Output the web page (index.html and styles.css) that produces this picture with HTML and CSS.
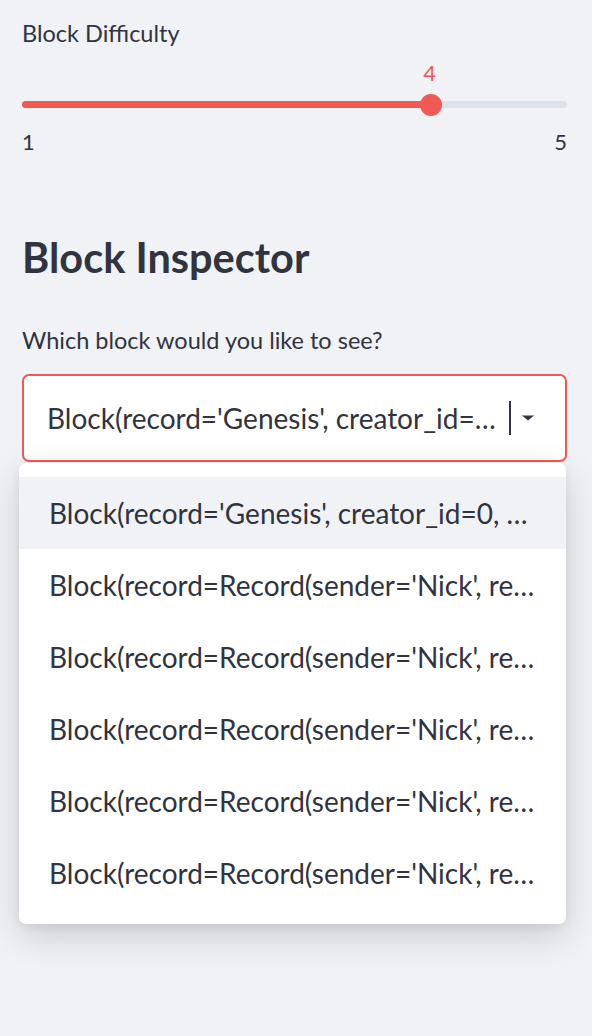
FILE: index.html
```html
<!DOCTYPE html>
<html>
<head>
<meta charset="utf-8">
<link rel="stylesheet" href="styles.css">
</head>
<body>
<div class="page">
  <section class="slider-block">
    <div class="label">Block Difficulty</div>
    <div class="slider">
      <div class="value" style="left: 75%">4</div>
      <div class="track">
        <div class="fill" style="width: 75%"></div>
        <div class="thumb" style="left: 75%"></div>
      </div>
    </div>
    <div class="ticks"><span>1</span><span>5</span></div>
  </section>

  <h2 class="heading">Block Inspector</h2>

  <section class="select-block">
    <div class="label">Which block would you like to see?</div>
    <div class="select">
      <span class="select-text">Block(record='Genesis', creator_id=…</span>
      <span class="select-controls">
        <span class="divider"></span>
        <svg class="arrow" width="14" height="8" viewBox="0 0 14 8"><path d="M1 1.5 L7 6.5 L13 1.5 Z" fill="#31333f"/></svg>
      </span>
    </div>
    <ul class="menu">
      <li class="item active">Block(record='Genesis', creator_id=0, …</li>
      <li class="item">Block(record=Record(sender='Nick', re…</li>
      <li class="item">Block(record=Record(sender='Nick', re…</li>
      <li class="item">Block(record=Record(sender='Nick', re…</li>
      <li class="item">Block(record=Record(sender='Nick', re…</li>
      <li class="item">Block(record=Record(sender='Nick', re…</li>
    </ul>
  </section>
</div>
</body>
</html>
```

FILE: styles.css
```css
* { box-sizing: border-box; }
html, body {
  margin: 0;
  padding: 0;
  background: #f0f2f6;
  color: #31333f;
  font-family: "Lato", "Source Sans Pro", sans-serif;
}
.page {
  width: 592px;
  height: 1036px;
  padding: 0 25px 0 22px;
}
.slider-block {
  padding-top: 19px;
}
.label {
  font-size: 23.5px;
  line-height: 28px;
}
.slider {
  position: relative;
  margin-top: 14px;
  height: 49px;
}
.value {
  position: absolute;
  top: 0;
  transform: translateX(-50%);
  color: #ef5a52;
  font-size: 22px;
  line-height: 24px;
  margin-left: -1px;
}
.track {
  position: absolute;
  left: 0;
  right: 0;
  top: 40px;
  height: 7px;
  border-radius: 4px;
  background: #dde1ea;
}
.fill {
  height: 100%;
  background: #ef5a52;
  border-radius: 4px;
}
.thumb {
  position: absolute;
  top: 50%;
  width: 22px;
  height: 22px;
  border-radius: 50%;
  background: #ef5a52;
  transform: translate(-50%, -50%);
}
.ticks {
  display: flex;
  justify-content: space-between;
  margin-top: 20px;
  font-size: 22px;
  line-height: 24px;
}
.heading {
  margin: 78px 0 0;
  font-size: 41.5px;
  line-height: 50px;
  font-weight: 700;
}
.select-block {
  margin-top: 44px;
}
.select {
  margin-top: 20px;
  height: 88px;
  background: #fff;
  border: 2px solid #ef5a52;
  border-radius: 7px;
  display: flex;
  align-items: center;
  padding: 0 0 0 23px;
}
.select-text {
  flex: 1;
  font-size: 28px;
  white-space: nowrap;
  overflow: hidden;
}
.select-controls {
  display: flex;
  align-items: center;
  gap: 10px;
  padding-right: 30px;
}
.divider {
  width: 2px;
  height: 34px;
  background: #31333f;
}
.arrow { display: block; }
.menu {
  list-style: none;
  margin: 1px 1px 0 -3px;
  padding: 14px 0 15px;
  background: #fff;
  border-radius: 7px;
  box-shadow: 0 12px 36px rgba(0,0,0,0.16), 0 3px 8px rgba(0,0,0,0.06);
}
.item {
  height: 72px;
  display: flex;
  align-items: center;
  padding-left: 30px;
  font-size: 28px;
  white-space: nowrap;
}
.item.active {
  background: #f0f2f6;
}
```
